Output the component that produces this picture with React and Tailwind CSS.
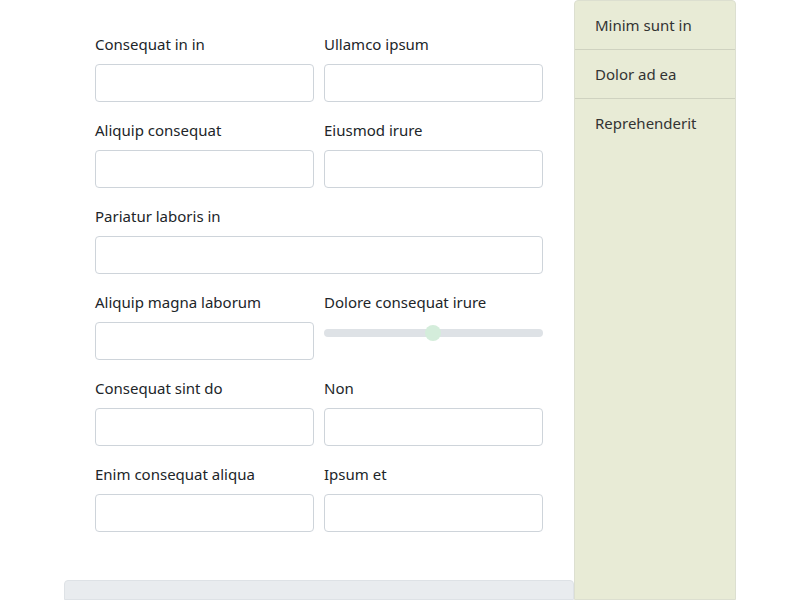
const rows = [
  [{ label: 'Consequat in in' }, { label: 'Ullamco ipsum' }],
  [{ label: 'Aliquip consequat' }, { label: 'Eiusmod irure' }],
  [{ label: 'Pariatur laboris in', full: true }],
  [{ label: 'Aliquip magna laborum' }, { label: 'Dolore consequat irure', range: true }],
  [{ label: 'Consequat sint do' }, { label: 'Non' }],
  [{ label: 'Enim consequat aliqua' }, { label: 'Ipsum et' }],
];

function Field({ label, full, range }) {
  return (
    <div className={full ? 'col-span-2' : ''}>
      <label className="block leading-6 mb-2 text-[15px] text-[#212529]">{label}</label>
      {range ? (
        <div className="relative h-[38px]">
          <div className="absolute left-0 right-0 top-[7px] h-2 rounded-full bg-[#dee2e6]" />
          <div className="absolute left-[101px] top-[3px] w-4 h-4 rounded-full bg-[#d4eddb]" />
        </div>
      ) : (
        <input className="block w-full h-[38px] rounded-[4px] border border-[#ced4da] bg-white" />
      )}
    </div>
  );
}

export default function App() {
  return (
    <div className="min-h-[600px] bg-white" style={{ fontFamily: '"Noto Sans", "Open Sans", sans-serif' }}>
      <div className="w-[672px] mx-auto flex h-[600px] overflow-hidden">
        <main className="flex-1 flex flex-col">
          <form className="px-[31px] pt-8 grid grid-cols-2 gap-x-[10px] gap-y-4">
            {rows.map((row, i) =>
              row.map((f, j) => <Field key={i + '-' + j} {...f} />)
            )}
          </form>
          <div className="mt-12 h-[200px] rounded-t-[4px] border border-[#dee2e6] bg-[#e9ecef]" />
        </main>
        <aside className="w-[162px] shrink-0 rounded-t-[4px] border border-[#dcdfd0] bg-[#e8ebd6] text-[15px] text-[#333]">
          {['Minim sunt in', 'Dolor ad ea', 'Reprehenderit'].map((t, i) => (
            <div key={t} className={'px-5 h-[49px] flex items-center ' + (i < 2 ? 'border-b border-[#cfd2c0]' : '')}>
              {t}
            </div>
          ))}
        </aside>
      </div>
    </div>
  );
}
